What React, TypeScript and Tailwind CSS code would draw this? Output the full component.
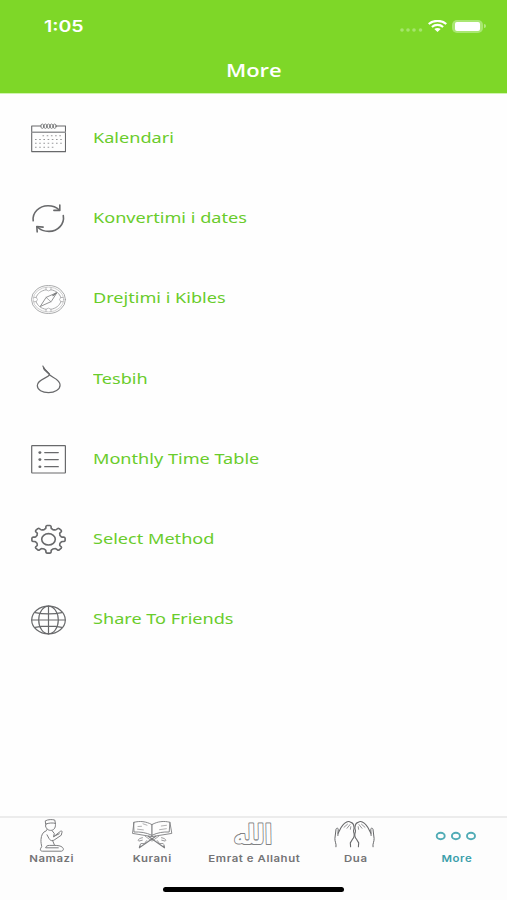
import type { ReactNode } from "react";

const svgProps = {
  fill: "none",
  stroke: "#68696b",
  strokeLinecap: "round" as const,
  strokeLinejoin: "round" as const,
};

function CalendarIcon() {
  return (
    <svg className="h-[30px] w-9" viewBox="0 0 36 30" {...svgProps} strokeWidth="1.1">
      <path d="M11 3H1.7V28.6H35.5V3H26" />
      <path d="M1.7 9.2H35.5" strokeWidth="1.5" stroke="#949597" />
      {[12.3, 15.4, 18.5, 21.6, 24.7].map((x) => (
        <ellipse key={x} cx={x} cy="3.2" rx="1.5" ry="2.2" strokeWidth="0.8" />
      ))}
      <g stroke="#97989a" strokeWidth="1.1" strokeLinecap="butt">
        <path d="M12.5 12.8H32.5" strokeDasharray="1.6 2.6" />
        <path d="M5 16.5H32.5" strokeDasharray="1.6 2.6" />
        <path d="M5 20.3H32.5" strokeDasharray="1.6 2.6" />
        <path d="M5 24.2H26" strokeDasharray="1.6 2.6" />
      </g>
    </svg>
  );
}

function ConvertIcon() {
  return (
    <svg className="h-[30px] w-9" viewBox="0 0 36 30" {...svgProps} strokeWidth="1.6">
      <path d="M3.2 17.8C2.1 9.8 9 2.8 18 2.8C22.5 2.8 26.5 4.3 29.3 7" />
      <path d="M29.8 2.1V7.4H23.9" />
      <path d="M33.3 12.6C34.7 20.9 28 28.4 19 28.4C14.5 28.4 10.5 27 7.3 24" />
      <path d="M7.2 28.9L6.8 23.5L13.1 24.1" />
    </svg>
  );
}

function CompassIcon() {
  return (
    <svg className="h-[30px] w-9" viewBox="0 0 36 30" {...svgProps} stroke="#a0a1a3" strokeWidth="0.9">
      <g transform="translate(.5 .5)">
        <ellipse cx="18" cy="15" rx="17" ry="14" />
        <ellipse cx="18" cy="15" rx="15.3" ry="12.4" strokeWidth="0.5" />
        <path d="M20.5 5.3C25.3 6 29.3 9 30.3 13M30.3 17.2C29.2 21.1 25.3 24 20.5 24.8M15.5 24.8C10.5 24 6.7 21 5.7 17.2M5.7 12.9C6.8 9 10.7 6 15.5 5.3" />
        <path d="M15.5 3.2V5.3L18 6.4L20.5 5.3V3.2M15.5 26.8V24.8L18 23.6L20.5 24.8V26.8M3.4 12.9H5.7L7 15L5.7 17.2H3.4M32.6 13H30.3L29 15L30.3 17.2H32.6" strokeWidth="0.7" />
        <g stroke="#77787a" strokeWidth="0.8">
          <path d="M26.1 8.2L15.6 12.9L9.7 22L20.4 17.2Z" />
          <path d="M15.6 12.9L20.4 17.2" strokeWidth="0.6" />
          <path d="M22.5 11L25.5 8.8" strokeWidth="1.3" />
        </g>
      </g>
    </svg>
  );
}

function BeadsIcon() {
  return (
    <svg className="h-[30px] w-9" viewBox="0 0 36 30" {...svgProps} strokeWidth="1.2">
      <path d="M12.9 2L14 4.5L18.5 9.2L19.7 10.9C21.3 13.2 30 15.2 30.1 21C30.1 25.7 24.7 28.7 18.5 28.7C12.3 28.7 7.3 26 7.3 21.5C7.3 15.3 17.5 14.2 19.6 10.9" />
      <path d="M13.8 4L14.6 5.7L19.2 10" strokeWidth="1.7" />
    </svg>
  );
}

function TableIcon() {
  return (
    <svg className="h-[30px] w-9" viewBox="0 0 36 30" {...svgProps} strokeWidth="1.2">
      <rect x="1.7" y="1.6" width="33.7" height="27.4" rx="0.5" />
      {[8.6, 15.6, 22.7].map((y) => (
        <g key={y}>
          <ellipse cx="9.9" cy={y} rx="1.5" ry="1.3" fill="#68696b" stroke="none" />
          <path d={`M14.7 ${y}H28.3`} />
        </g>
      ))}
    </svg>
  );
}

// Eight rounded teeth, evenly spaced around the hub.
const gearPath = (() => {
  const point = (radius: number, degrees: number) => {
    const a = (degrees * Math.PI) / 180;
    return `${(18.5 + radius * 1.2 * Math.cos(a)).toFixed(2)} ${(15.3 + radius * Math.sin(a)).toFixed(2)}`;
  };
  let d = `M${point(10.7, -17)}`;
  for (let i = 0; i < 8; i++) {
    const a = i * 45;
    d += `Q${point(10.8, a - 10)} ${point(12.8, a - 10)}Q${point(13.8, a - 9)} ${point(13.9, a - 5)}`;
    d += `L${point(13.9, a + 5)}Q${point(13.8, a + 9)} ${point(12.8, a + 10)}`;
    d += `Q${point(10.8, a + 10)} ${point(10.7, a + 17)}Q${point(9.9, a + 22.5)} ${point(10.7, a + 28)}`;
  }
  return d + "Z";
})();

function GearIcon() {
  return (
    <svg className="h-[30px] w-9" viewBox="0 0 36 30" {...svgProps} strokeWidth="1.6">
      <path d={gearPath} />
      <ellipse cx="18.5" cy="15.3" rx="6.8" ry="5.7" />
    </svg>
  );
}

function GlobeIcon() {
  return (
    <svg className="h-[30px] w-9" viewBox="0 0 36 30" {...svgProps} strokeWidth="1.2">
      <g transform="translate(.5 0)">
        <ellipse cx="18" cy="15" rx="16.8" ry="13.8" />
        <ellipse cx="18" cy="15" rx="9.8" ry="13.8" />
        <path d="M18 1.2V28.8M1.2 15H34.8M4.8 7.6C12 9.4 24 9.4 31.2 7.6M4.8 22.4C12 20.7 24 20.7 31.2 22.4" />
      </g>
    </svg>
  );
}

function PrayerIcon() {
  return (
    <svg className="h-9 w-[42px]" viewBox="0 0 42 36" {...svgProps} stroke="#7d7e80" strokeWidth="1">
      <path d="M15.6 2.7C18 1.3 22.5 1.3 24.8 2.1L25.4 5.4C23 4.7 18.7 4.8 16 6ZM16 6L15.5 8C16.5 11.5 19 12.7 21.5 12.3C24.4 11.9 26 9 25.4 5.4" />
      <path d="M17 11.5L16.3 12.8C12.6 13.9 11.3 17.5 11 21.5C10.7 24.5 11.5 26.7 11.7 28.5L10.5 30.8C10 32.3 11 33.2 12.5 33.2H31.5C33.5 32.8 34 30.8 32.5 29.4C30.7 27.7 27.5 27.4 24.6 27.4L22.5 22.3" />
      <path d="M22 12.6L24.3 15.5L23.5 18.8L30.6 13.2C31.9 12.7 32.9 13.7 31.8 14.8L31.3 17.2L24.2 22C21.5 23.5 19.8 22.1 18.9 20.3L17 16.8" />
      <path d="M24.4 27.4H19.7C17.2 27.3 16 28.3 15.6 29.8H28.3M24 18.4L29.2 15.8" />
    </svg>
  );
}

function QuranIcon() {
  return (
    <svg className="h-9 w-[42px]" viewBox="0 0 42 36" {...svgProps} stroke="#7d7e80" strokeWidth="0.9">
      <path d="M3 4.3L1.5 15.4L20.9 18.6L40.8 15.4L38.9 4.3" />
      <path d="M3 4.3C9 2.7 15 3.4 20.9 6.6C26.7 3.4 33 2.7 38.9 4.3L38.2 14C32.5 13.7 26.5 14.6 20.9 17.3C15.2 14.6 9.3 13.7 3.4 14Z" />
      <path d="M20.9 6.6V18.6" strokeWidth="1.2" />
      <path d="M7 8.5L10.5 8.3M6.5 11.2L12.4 11.9M30.3 8L35.5 7.3M28.5 11.7L35.3 10.7M12 5.8L16 7.2" strokeWidth="0.6" />
      <path d="M17.2 18.3L33.5 29.8L32.9 26.8M24.8 18.3L8.3 29.8L9.3 26.6" strokeWidth="1.1" />
      <path d="M14.2 18.2L21 23.2L27.8 18.2" strokeWidth="0.7" />
      <path d="M11.5 19.7C8.2 20.2 6.3 22 7.8 23.1L11.3 22.2M10 25.5L13.4 25.6L15.7 22.6M30.5 19.7C33.8 20.2 35.7 22 34.2 23.1L30.7 22.2M32 25.5L28.6 25.6L26.3 22.6" strokeWidth="0.8" />
    </svg>
  );
}

function NamesIcon() {
  return (
    <svg className="h-9 w-[42px] overflow-visible" viewBox="0 0 42 36" {...svgProps} stroke="#808183" strokeWidth="2">
      <text
        x="21"
        y="26.5"
        textAnchor="middle"
        textLength="39"
        lengthAdjust="spacingAndGlyphs"
        transform="translate(-.5 0) skewX(1)"
        className="font-['DejaVu_Sans',sans-serif] text-[27px] leading-none font-bold [paint-order:stroke]"
        fill="#fdfdfd"
      >
        الله
      </text>
    </svg>
  );
}

function HandsIcon() {
  const hand = (
    <>
      <path d="M2 28.8C2.6 25.7 .7 23.7 .9 20.5L2 11.3C2.6 9.5 4.4 9.8 4.2 12L3.9 17.5" />
      <path d="M4.1 15.2C6.4 11.3 7.6 6.5 12.2 4.3C14 3.1 15.6 3.4 16.8 4.4C18.3 4.6 19.7 6.4 20 9.1C20.6 10.9 19.1 11.8 19.6 13.7C20.6 16.2 20 19.7 18.2 21.7L16.3 24.9L16.6 28.8" strokeWidth="1.1" />
      <path d="M10 9.3L13.5 6.2M13 10.3L16 6.6M16.8 8.7L16.4 11.3" strokeWidth="0.7" />
    </>
  );
  return (
    <svg className="h-9 w-[42px]" viewBox="0 0 42 36" {...svgProps} strokeWidth="1">
      {hand}
      <g transform="translate(41 0) scale(-1 1)">{hand}</g>
    </svg>
  );
}

function MoreIcon() {
  return (
    <svg className="h-9 w-[42px]" viewBox="0 0 42 36" fill="none" stroke="#51acb6" strokeWidth="1.9">
      {[5.7, 20.9, 36].map((x) => (
        <ellipse key={x} cx={x} cy="18" rx="4" ry="3.2" />
      ))}
    </svg>
  );
}

const rows: { label: string; icon: ReactNode }[] = [
  { label: "Kalendari", icon: <CalendarIcon /> },
  { label: "Konvertimi i dates", icon: <ConvertIcon /> },
  { label: "Drejtimi i Kibles", icon: <CompassIcon /> },
  { label: "Tesbih", icon: <BeadsIcon /> },
  { label: "Monthly Time Table", icon: <TableIcon /> },
  { label: "Select Method", icon: <GearIcon /> },
  { label: "Share To Friends", icon: <GlobeIcon /> },
];

const tabs: { label: string; icon: ReactNode; active?: boolean }[] = [
  { label: "Namazi", icon: <PrayerIcon /> },
  { label: "Kurani", icon: <QuranIcon /> },
  { label: "Emrat e Allahut", icon: <NamesIcon /> },
  { label: "Dua", icon: <HandsIcon /> },
  { label: "More", icon: <MoreIcon />, active: true },
];

function StatusBar() {
  return (
    <div className="flex h-12 items-center pt-1 pr-[21px] pl-[44px] text-white">
      <span className="origin-left scale-x-[1.22] font-['Inter',sans-serif] text-base font-semibold">1:05</span>
      <svg className="mt-[7px] ml-auto h-1 w-[23px]" viewBox="0 0 23 4" fill="#a5e56c">
        <circle cx="2" cy="2" r="1.8" />
        <circle cx="8" cy="2" r="1.8" />
        <circle cx="14" cy="2" r="1.8" />
        <circle cx="20.5" cy="2" r="1.8" />
      </svg>
      <svg className="ml-[5px] h-3 w-[19px]" viewBox="0 0 19 12" fill="none" stroke="#fff" strokeWidth="2.1">
        <path d="M.7 4C5.5-.2 13.5-.2 18.3 4M3.9 7C7 4.2 12 4.2 15.1 7" />
        <path d="M6.3 9.1C8.2 7.5 10.8 7.5 12.7 9.1L9.5 12Z" fill="#fff" stroke="none" />
      </svg>
      <div className="ml-[5px] flex h-[13px] w-[31px] rounded-[5px] bg-[#a9e772] p-0.5">
        <div className="mx-px w-full rounded-[2px] bg-white" />
      </div>
      <div className="ml-px h-1 w-0.5 rounded-r-full bg-[#b3ea80]" />
    </div>
  );
}

export default function App() {
  return (
    <div className="flex h-[900px] w-[507px] flex-col overflow-hidden bg-[#fefefe] font-['Noto_Sans',sans-serif]">
      <header className="h-[94px] shrink-0 border-b border-[#d0f4b0] bg-[#7ed728]">
        <StatusBar />
        <h1 className="mt-[7px] text-center font-['Open_Sans',sans-serif] text-lg leading-[30px] font-semibold text-white">
          <span className="inline-block scale-x-[1.22]">More</span>
        </h1>
      </header>
      <main className="flex-1 pt-[4px]">
        {rows.map(({ label, icon }) => (
          <div key={label} className="flex h-[80.25px] items-center gap-[27px] pl-[30px]">
            {icon}
            <span className="mb-0.5 origin-left scale-x-[1.207] text-[15px] whitespace-nowrap text-[#69cc2b]">{label}</span>
          </div>
        ))}
      </main>
      <footer className="h-[84px] shrink-0 border-t-2 border-[#ececec] bg-[#fdfdfd]">
        <nav className="grid h-[67px] grid-cols-5">
          {tabs.map(({ label, icon, active }) => (
            <div key={label} className="flex flex-col items-center">
              {icon}
              <span
                className={`-mt-0.5 ml-px scale-x-[1.2] font-['Inter',sans-serif] text-[9.5px] leading-[14px] font-semibold tracking-[0.05em] whitespace-nowrap ${
                  active ? "text-[#3c9fab]" : "text-[#747476]"
                }`}
              >
                {label}
              </span>
            </div>
          ))}
        </nav>
        <div className="mx-auto mt-[2px] h-[5px] w-[181px] rounded-full bg-black" />
      </footer>
    </div>
  );
}
